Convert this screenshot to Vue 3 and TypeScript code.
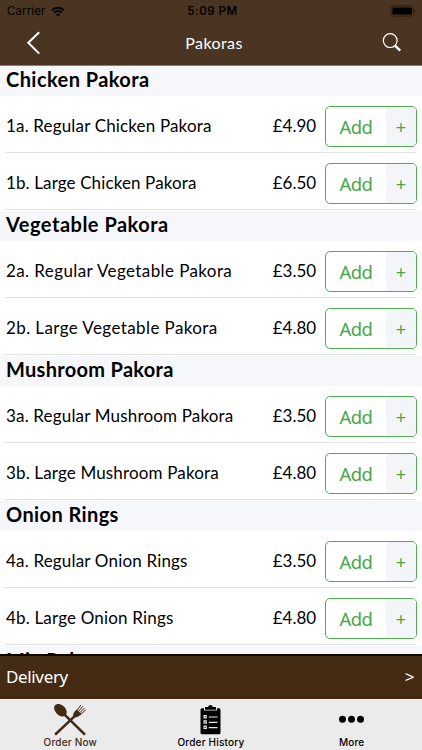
<script setup lang="ts">
interface Item { name: string; price: string; tracking: number }
interface Section { title: string; tracking: number; items: Item[] }

const sections: Section[] = [
  { title: 'Chicken Pakora', tracking: 0.43, items: [
    { name: '1a. Regular Chicken Pakora', price: '£4.90', tracking: 0.16 },
    { name: '1b. Large Chicken Pakora', price: '£6.50', tracking: 0.12 },
  ] },
  { title: 'Vegetable Pakora', tracking: 0.5, items: [
    { name: '2a. Regular Vegetable Pakora', price: '£3.50', tracking: 0.4 },
    { name: '2b. Large Vegetable Pakora', price: '£4.80', tracking: 0.4 },
  ] },
  { title: 'Mushroom Pakora', tracking: 0.3, items: [
    { name: '3a. Regular Mushroom Pakora', price: '£3.50', tracking: 0.17 },
    { name: '3b. Large Mushroom Pakora', price: '£4.80', tracking: 0.15 },
  ] },
  { title: 'Onion Rings', tracking: 0.4, items: [
    { name: '4a. Regular Onion Rings', price: '£3.50', tracking: 0.18 },
    { name: '4b. Large Onion Rings', price: '£4.80', tracking: 0.18 },
  ] },
  { title: 'Mix Pakora', tracking: 0.3, items: [] },
]
</script>

<template>
  <div class="screen">
    <header class="top">
      <div class="status">
        <div class="carrier">
          <span>Carrier</span>
          <svg width="14" height="11" viewBox="0 0 14 11">
            <path d="M1 4.2a8.6 8.6 0 0 1 12 0M3.2 6.6a5.4 5.4 0 0 1 7.6 0" fill="none" stroke="#000" stroke-width="1.9" />
            <path d="M7 10.6 4.9 8.5a3 3 0 0 1 4.2 0z" />
          </svg>
        </div>
        <div class="clock">5:09 PM</div>
        <div class="power">
          <svg width="27" height="12" viewBox="0 0 27 12">
            <rect x="0.9" y="0.9" width="22.6" height="10.2" rx="2.6" fill="none" stroke="#2a1d10" stroke-width="1" />
            <rect x="2.4" y="2.4" width="19.6" height="7.2" rx="1.2" />
            <path d="M24.6 4.2c1.5.5 1.5 3.1 0 3.6z" fill="#2a1d10" />
          </svg>
        </div>
      </div>
      <nav class="nav">
        <svg class="back" width="16" height="24" viewBox="0 0 16 24">
          <path d="M13.2 1.2 2.3 11.8 13.2 22.6" fill="none" stroke="#fff" stroke-width="2" />
        </svg>
        <h1>Pakoras</h1>
        <svg class="search" width="20" height="20" viewBox="0 0 20 20">
          <circle cx="8.2" cy="7.6" r="6.9" fill="none" stroke="#fff" stroke-width="1.2" />
          <path d="m12.8 12.3 5.4 5.3" stroke="#fff" stroke-width="2.4" />
        </svg>
      </nav>
    </header>

    <main class="list">
      <section v-for="s in sections" :key="s.title">
        <h2 :style="{ letterSpacing: s.tracking + 'px' }">{{ s.title }}</h2>
        <div v-for="i in s.items" :key="i.name" class="row">
          <span class="name" :style="{ letterSpacing: i.tracking + 'px' }">{{ i.name }}</span>
          <span class="price">{{ i.price }}</span>
          <button class="add"><span class="label">Add</span><span class="plus">+</span></button>
        </div>
      </section>
    </main>

    <div class="delivery"><span>Delivery</span><span class="arrow">&gt;</span></div>

    <footer class="tabs">
      <div class="tab active">
        <svg width="34" height="33" viewBox="0 0 34 33">
          <path d="M10 10.2 31.3 31" stroke="#442c14" stroke-width="2.5" stroke-linecap="round" />
          <path d="M23 11.8 2.8 31" stroke="#442c14" stroke-width="2.5" stroke-linecap="round" />
          <ellipse cx="7.4" cy="7.2" rx="7.3" ry="5.1" transform="rotate(45 7.4 7.2)" fill="#442c14" />
          <path d="M20.2 11.2c-.6 2 1 3.600 3 3.100 2.200-.4 3.800-1.500 5.300-3.200l-4.700-4.700c-1.800 1.500-3.100 2.800-3.600 4.800z" fill="#442c14" />
          <path d="m24.200 7.200 3.600-5.100M25.600 8.400l4.100-5.100M27 9.700l4.500-4.800M28 11l4.800-4.200" stroke="#442c14" stroke-width="1" />
        </svg>
        <span>Order Now</span>
      </div>
      <div class="tab">
        <svg width="34" height="33" viewBox="0 0 34 33">
          <path d="M8 5.200h2V7.600h13V5.200h2q1.500 0 1.500 1.500v23q0 1.500-1.500 1.500H8q-1.500 0-1.500-1.500v-23Q6.500 5.200 8 5.200z" />
          <path d="M11 4h3a2.600 2.600 0 0 1 5 0h3v2.800H11z" />
          <g fill="#ebebeb">
            <path d="M9.500 12h3.400v3.400H9.500zM9.500 17.300h3.400v3.400H9.500zM9.500 22.600h3.400V26H9.500z" />
            <path d="M14.800 13.500h8.700v1.100h-8.700zM14.800 18.800h8.700v1.100h-8.700zM14.800 24.100h8.700v1.100h-8.700z" />
          </g>
          <path d="m10.300 13.600.7.700 1.200-1.500M10.300 18.900l.7.700 1.200-1.500M10.300 24.200l.7.700 1.200-1.500" fill="none" stroke="#000" stroke-width="0.7" />
        </svg>
        <span>Order History</span>
      </div>
      <div class="tab">
        <svg width="34" height="33" viewBox="0 0 34 33">
          <circle cx="7.500" cy="16.200" r="3.500" /><circle cx="16.500" cy="16.200" r="3.500" /><circle cx="25.500" cy="16.200" r="3.500" />
        </svg>
        <span>More</span>
      </div>
    </footer>
  </div>
</template>

<style>
body { margin: 0; background: #fff; }
</style>

<style scoped>
.screen { width: 422px; height: 750px; display: flex; flex-direction: column; overflow: hidden; background: #fff; color: #000; font-family: Lato, "Open Sans", sans-serif; }
.top { height: 65px; flex: none; background: #4a3522; border-bottom: 1px solid #8a7c6f; box-sizing: content-box; }
.status { height: 22px; display: grid; grid-template-columns: 1fr 1fr 1fr; align-items: center; font: 11.5px/22px Inter, sans-serif; }
.carrier { display: flex; align-items: center; gap: 6px; padding-left: 7px; letter-spacing: 0.1px; }
.clock { text-align: center; font-weight: 600; letter-spacing: 0.5px; padding-left: 3px; }
.power { display: flex; justify-content: flex-end; padding-right: 5px; }
.nav { height: 42px; display: grid; grid-template-columns: 1fr auto 1fr; align-items: center; padding: 0 20px 0 26px; }
h1 { margin: 0; font-size: 16px; font-weight: 400; line-height: 24px; color: #fff; letter-spacing: 0.4px; }
.search { justify-self: end; }
.list { height: 588px; flex: none; overflow: hidden; }
section { height: 145px; }
h2 { margin: 0; height: 30px; padding-left: 6px; background: #f6f7fa; font-size: 20px; line-height: 27px; font-weight: 700; }
section:last-child h2 { line-height: 29px; }
.row { height: 56px; margin: 0 6px 0 5px; border-bottom: 1px solid #e2e2e4; display: flex; align-items: flex-start; font-size: 17px; line-height: 60px; }
.name { flex: 1; white-space: nowrap; padding-left: 1px; }
.price { margin-right: 9px; letter-spacing: -0.05px; }
.add { width: 92px; height: 41px; box-sizing: border-box; margin: 10px -1px 0 0; padding: 0; border: 1px solid #4fae50; border-radius: 5px; background: #fff; color: #48a847; overflow: hidden; display: flex; align-items: stretch; font-family: "Noto Sans", sans-serif; }
.label { flex: 1; font-size: 18.5px; line-height: 39px; letter-spacing: -0.6px; }
.plus { width: 30px; background: #f4f5f8; font-size: 18px; line-height: 40px; }
.delivery { height: 45px; flex: none; border-top: 2px solid #0c0704; background: #442c14; color: #fff; display: flex; align-items: center; justify-content: space-between; padding: 0 8px 2px 6px; box-sizing: border-box; font: 17px "Noto Sans", sans-serif; letter-spacing: -0.35px; }
.tabs { flex: 1; background: #ebebeb; display: grid; grid-template-columns: repeat(3, 1fr); }
.tab { display: flex; flex-direction: column; align-items: center; font: 500 10px/12px Inter, sans-serif; letter-spacing: 0.2px; padding-top: 4px; }
.active { color: #442c14; }
</style>
